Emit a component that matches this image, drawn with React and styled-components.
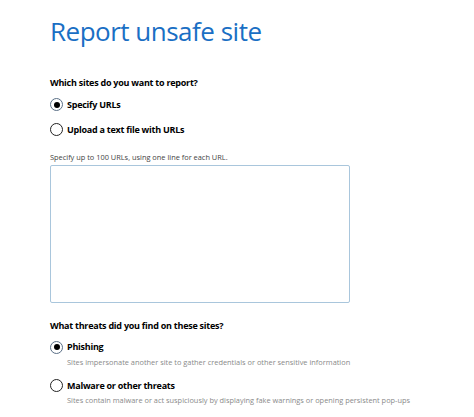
import React, { useState } from 'react';
import styled, { createGlobalStyle } from 'styled-components';

const GlobalStyle = createGlobalStyle`
  html, body {
    margin: 0;
    padding: 0;
    background: #ffffff;
  }
  body {
    font-family: "Open Sans", "Noto Sans", "Liberation Sans", sans-serif;
    color: #000000;
  }
`;

const Page = styled.div`
  padding: 15px 0 0 50px;
  width: 424px;
  box-sizing: border-box;
`;

const Title = styled.h1`
  margin: 0;
  font-size: 26px;
  line-height: 32px;
  font-weight: 400;
  color: #1a6fc4;
  letter-spacing: -0.5px;
`;

const Section = styled.section`
  display: flex;
  flex-direction: column;
  margin-top: ${(props) => props.gap}px;
`;

const Question = styled.h2`
  margin: 0 0 2.5px;
  font-size: 9px;
  line-height: 14px;
  font-weight: 700;
  letter-spacing: -0.25px;
`;

const Option = styled.label`
  display: flex;
  flex-direction: column;
  padding: 5px 0 6px;
  cursor: pointer;
`;

const OptionRow = styled.div`
  display: flex;
  align-items: center;
  gap: 4px;
`;

const RadioCircle = styled.span`
  width: 11px;
  height: 11px;
  border-radius: 50%;
  border: 1px solid ${(props) => (props.checked ? '#5a6f86' : '#222')};
  display: flex;
  align-items: center;
  justify-content: center;
  flex-shrink: 0;
  &::after {
    content: '';
    width: 6px;
    height: 6px;
    border-radius: 50%;
    background: #000;
    display: ${(props) => (props.checked ? 'block' : 'none')};
  }
`;

const OptionLabel = styled.span`
  font-size: 9px;
  line-height: 14px;
  font-weight: 700;
  letter-spacing: -0.25px;
`;

const OptionHint = styled.span`
  margin-left: 17px;
  margin-top: 2.5px;
  font-size: 7.4px;
  line-height: 11px;
  color: #8a8a8a;
`;

const FieldHint = styled.div`
  margin-top: 9px;
  font-size: 7.4px;
  line-height: 11px;
  color: #444;
`;

const UrlBox = styled.textarea`
  margin-top: 2px;
  width: 300px;
  height: 138px;
  box-sizing: border-box;
  border: 1px solid #a9c6dc;
  border-radius: 2px;
  resize: none;
  outline: none;
  font-family: inherit;
`;

const RadioOption = ({ label, hint, checked, onSelect }) => (
  <Option onClick={onSelect}>
    <OptionRow>
      <RadioCircle checked={checked} />
      <OptionLabel>{label}</OptionLabel>
    </OptionRow>
    {hint && <OptionHint>{hint}</OptionHint>}
  </Option>
);

const App = () => {
  const [source, setSource] = useState('urls');
  const [threat, setThreat] = useState('phishing');

  return (
    <Page>
      <GlobalStyle />
      <Title>Report unsafe site</Title>

      <Section gap={29}>
        <Question>Which sites do you want to report?</Question>
        <RadioOption label="Specify URLs" checked={source === 'urls'} onSelect={() => setSource('urls')} />
        <RadioOption label="Upload a text file with URLs" checked={source === 'file'} onSelect={() => setSource('file')} />
        <FieldHint>Specify up to 100 URLs, using one line for each URL.</FieldHint>
        <UrlBox />
      </Section>

      <Section gap={16}>
        <Question>What threats did you find on these sites?</Question>
        <RadioOption
          label="Phishing"
          hint="Sites impersonate another site to gather credentials or other sensitive information"
          checked={threat === 'phishing'}
          onSelect={() => setThreat('phishing')}
        />
        <RadioOption
          label="Malware or other threats"
          hint="Sites contain malware or act suspiciously by displaying fake warnings or opening persistent pop-ups"
          checked={threat === 'malware'}
          onSelect={() => setThreat('malware')}
        />
      </Section>
    </Page>
  );
};

export default App;
